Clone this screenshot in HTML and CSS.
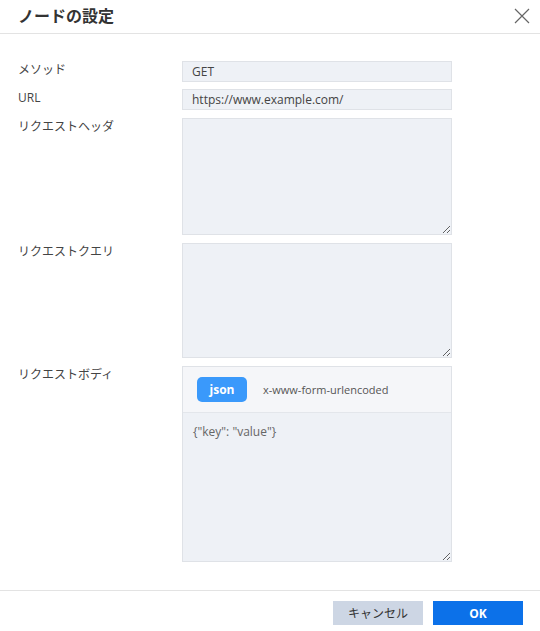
FILE: index.html
```html
<!DOCTYPE html>
<html lang="ja">
  <head>
    <meta charset="UTF-8" />
    <meta name="viewport" content="width=device-width, initial-scale=1.0" />
    <title>ノードの設定</title>
    <link rel="stylesheet" href="styles.css">
  </head>
  <body>
    <div class="dialog">
      <header class="dialog-header">
        <h1>ノードの設定</h1>
        <button class="close" type="button" aria-label="閉じる">
          <svg width="16" height="16" viewBox="0 0 16 16">
            <path d="M1 1 L15 15 M15 1 L1 15" stroke="#666" stroke-width="1.2" fill="none" />
          </svg>
        </button>
      </header>

      <form class="dialog-body">
        <!-- Method -->
        <div class="row row-tight">
          <label class="label" for="method">メソッド</label>
          <input class="field input" id="method" type="text" value="GET" readonly>
        </div>

        <div class="row">
          <label class="label" for="url">URL</label>
          <input class="field input" id="url" type="text" value="https://www.example.com/" readonly>
        </div>

        <div class="row">
          <label class="label" for="headers">リクエストヘッダ</label>
          <textarea class="field area" id="headers"></textarea>
        </div>

        <div class="row">
          <label class="label" for="query">リクエストクエリ</label>
          <textarea class="field area" id="query"></textarea>
        </div>

        <!-- Body -->
        <div class="row">
          <label class="label" for="body">リクエストボディ</label>
          <div class="field body-box">
            <div class="tabs">
              <button type="button" class="tab active">json</button>
              <button type="button" class="tab">x-www-form-urlencoded</button>
            </div>
            <textarea class="body-area" id="body">{"key": "value"}</textarea>
          </div>
        </div>
      </form>

      <footer class="dialog-footer">
        <button type="button" class="btn btn-cancel">キャンセル</button>
        <button type="button" class="btn btn-ok">OK</button>
      </footer>
    </div>
  </body>
</html>
```

FILE: styles.css
```css
body {
  margin: 0;
  padding: 0;
  background: #fff;
  font-family: 'Open Sans', 'Noto Sans CJK JP', sans-serif;
  font-size: 12px;
  color: #333;
}

.dialog {
  width: 540px;
  height: 631px;
  display: flex;
  flex-direction: column;
}

.dialog-header {
  height: 33px;
  border-bottom: 1px solid #e3e3e3;
  display: flex;
  align-items: center;
  justify-content: space-between;
  padding: 0 9px 0 18px;
}

.dialog-header h1 {
  margin: 0;
  font-family: 'Noto Sans CJK JP', sans-serif;
  font-size: 16px;
  font-weight: bold;
  color: #333;
  margin-top: -4px;
}

.close {
  border: none;
  background: none;
  padding: 0;
  width: 18px;
  height: 18px;
  display: flex;
  align-items: center;
  justify-content: center;
  margin-top: -2px;
  cursor: pointer;
}

.dialog-body {
  flex: 1;
  padding: 27px 0 0 18px;
  margin: 0;
}

.row {
  display: flex;
  margin-bottom: 8px;
}

.row-tight {
  margin-bottom: 7px;
}

.label {
  width: 164px;
  line-height: 16px;
  padding-top: 1px;
  color: #444;
}

.field {
  width: 270px;
  box-sizing: border-box;
  background-color: #eef1f6;
  border: 1px solid #dfe2e7;
  border-radius: 0;
  font-family: inherit;
  font-size: 12px;
  color: #444;
  margin: 0;
}

.input {
  height: 21px;
  padding: 0 9px;
  outline: none;
}

.area {
  height: 117px;
  padding: 4px 9px;
  resize: vertical;
  outline: none;
}

#query {
  height: 115px;
}

.body-box {
  height: 196px;
  display: flex;
  flex-direction: column;
  background-color: #f5f6f9;
}

.tabs {
  height: 45px;
  border-bottom: 1px solid #e3e6eb;
  display: flex;
  align-items: center;
  padding: 0 14px;
  gap: 16px;
}

.tab {
  border: none;
  background: none;
  font-family: inherit;
  font-size: 11px;
  color: #555;
  padding: 0;
  cursor: pointer;
}

.tab.active {
  width: 50px;
  height: 25px;
  background-color: #3a99fb;
  color: #fff;
  font-size: 12px;
  font-weight: bold;
  border-radius: 5px;
}

.body-area {
  flex: 1;
  border: none;
  background-color: #eef1f6;
  font-family: inherit;
  font-size: 12px;
  color: #666;
  padding: 10px 10px;
  resize: vertical;
  outline: none;
}

.dialog-footer {
  height: 41px;
  border-top: 1px solid #e3e3e3;
  display: flex;
  justify-content: flex-end;
  align-items: flex-start;
  gap: 10px;
  padding: 10px 17px 0 0;
  box-sizing: border-box;
}

.btn {
  width: 90px;
  height: 24px;
  border: none;
  font-family: inherit;
  font-size: 12px;
  cursor: pointer;
}

.btn-cancel {
  background-color: #cdd6e4;
  color: #333;
}

.btn-ok {
  background-color: #0c71e9;
  color: #fff;
  font-weight: bold;
}
```
